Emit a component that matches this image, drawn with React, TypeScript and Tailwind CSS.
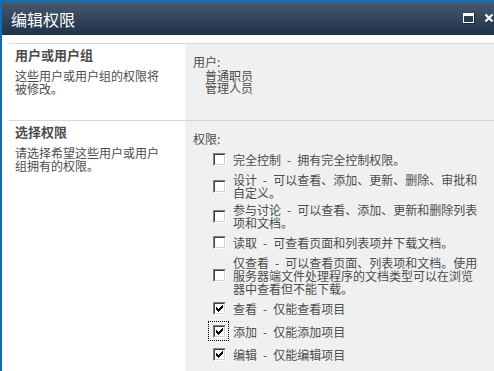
import React from "react";

const items: { lines: string[]; checked: boolean; focus?: boolean }[] = [
  { lines: ["完全控制\u2002-\u2002拥有完全控制权限。"], checked: false },
  { lines: ["设计\u2002-\u2002可以查看、添加、更新、删除、审批和", "自定义。"], checked: false },
  { lines: ["参与讨论\u2002-\u2002可以查看、添加、更新和删除列表", "项和文档。"], checked: false },
  { lines: ["读取\u2002-\u2002可查看页面和列表项并下载文档。"], checked: false },
  {
    lines: [
      "仅查看\u2002-\u2002可以查看页面、列表项和文档。使用",
      "服务器端文件处理程序的文档类型可以在浏览",
      "器中查看但不能下载。",
    ],
    checked: false,
  },
  { lines: ["查看\u2002-\u2002仅能查看项目"], checked: true },
  { lines: ["添加\u2002-\u2002仅能添加项目"], checked: true, focus: true },
  { lines: ["编辑\u2002-\u2002仅能编辑项目"], checked: true },
];

function Lines({ lines }: { lines: string[] }) {
  return (
    <>
      {lines.map((l, j) => (
        <React.Fragment key={j}>
          {j > 0 && <br />}
          {l}
        </React.Fragment>
      ))}
    </>
  );
}

function Checkbox({ checked, focus }: { checked: boolean; focus?: boolean }) {
  return (
    <div className="relative my-[3px] h-[13px] w-[13px] shrink-0">
      {focus && (
        <div className="absolute -left-[5px] -top-[4px] h-[20px] w-[21px] border border-dotted border-black" />
      )}
      <div className="h-[13px] w-[13px] border-t border-l border-r border-b border-t-[#808080] border-l-[#808080] border-r-white border-b-white">
        <div className="relative h-[11px] w-[11px] border border-t-[#404040] border-l-[#404040] border-r-[#d4d0c8] border-b-[#d4d0c8] bg-white">
          {checked && (
            <svg
              className="absolute left-[1px] top-[1px]"
              width="7"
              height="7"
              viewBox="0 0 7 7"
              shapeRendering="crispEdges"
            >
              <path d="M0 2h1v3h-1z M1 3h1v3h-1z M2 4h1v3h-1z M3 3h1v3h-1z M4 2h1v3h-1z M5 1h1v3h-1z M6 0h1v3h-1z" fill="#000" />
            </svg>
          )}
        </div>
      </div>
    </div>
  );
}

export default function App() {
  return (
    <div className="relative h-[371px] w-[494px] overflow-hidden border-l-2 border-[#0072c6] bg-white font-['Noto_Sans_CJK_SC',sans-serif] text-[#4c4c4c]">
      {/* Title bar */}
      <div className="flex h-[35px] items-center border-t-2 border-[#0a73c0] bg-gradient-to-b from-[#46596f] to-[#1f3249] pl-[9px]">
        <div className="text-[16px] leading-[18px] text-white">编辑权限</div>
        <div className="ml-auto flex items-center gap-[9px]">
          <svg width="12" height="11" viewBox="0 0 12 11" shapeRendering="crispEdges" className="mt-[-1px]">
            <rect x="1" y="1" width="11" height="10" fill="#1a2636" />
            <rect x="0" y="0" width="11" height="10" fill="#ffffff" />
            <rect x="1" y="3" width="9" height="6" fill="#2a3c52" />
          </svg>
          <svg width="10" height="10" viewBox="0 0 10 10" className="mt-[-1px]">
            <path d="M1.5 1.5 L8.5 8.5 M8.5 1.5 L1.5 8.5" stroke="#1a2636" strokeWidth="2.6" transform="translate(0.6 0.6)" />
            <path d="M1.5 1.5 L8.5 8.5 M8.5 1.5 L1.5 8.5" stroke="#ffffff" strokeWidth="2.4" />
          </svg>
        </div>
      </div>

      {/* Content */}
      <div className="ml-[7px] mt-[8px] border-t border-[#d8d8d8]">
        {/* Row 1 */}
        <div className="flex h-[76px]">
          <div className="w-[176px] shrink-0 bg-white pl-[6px] pt-[4px]">
            <div className="text-[13px] font-bold leading-[13px]">用户或用户组</div>
            <p className="mt-[9px] text-[12px] leading-[12.5px]">
              <Lines lines={["这些用户或用户组的权限将", "被修改。"]} />
            </p>
          </div>
          <div className="flex-1 bg-[#f0f0f0] pl-[8px] pt-[11px] text-[12px]">
            <div className="leading-[13px]">用户:</div>
            <p className="mt-[2px] pl-[12px] leading-[12px]">
              <Lines lines={["普通职员", "管理人员"]} />
            </p>
          </div>
        </div>

        {/* Row 2 */}
        <div className="flex h-[260px] border-t border-[#d8d8d8]">
          <div className="w-[176px] shrink-0 bg-white pl-[6px] pt-[4px]">
            <div className="text-[13px] font-bold leading-[13px]">选择权限</div>
            <p className="mt-[9px] text-[12px] leading-[12.5px]">
              <Lines lines={["请选择希望这些用户或用户", "组拥有的权限。"]} />
            </p>
          </div>
          <div className="flex-1 bg-[#f0f0f0] pl-[8px] pt-[11px] text-[12px]">
            <div className="leading-[13px]">权限:</div>
            <div className="mt-[3px] flex flex-col pl-[20px]">
              {items.map((it, i) => (
                <div key={i} className="flex items-center gap-[7px] py-[2px]">
                  <Checkbox checked={it.checked} focus={it.focus} />
                  <p className="whitespace-nowrap leading-[13px]">
                    <Lines lines={it.lines} />
                  </p>
                </div>
              ))}
            </div>
          </div>
        </div>
      </div>
    </div>
  );
}
